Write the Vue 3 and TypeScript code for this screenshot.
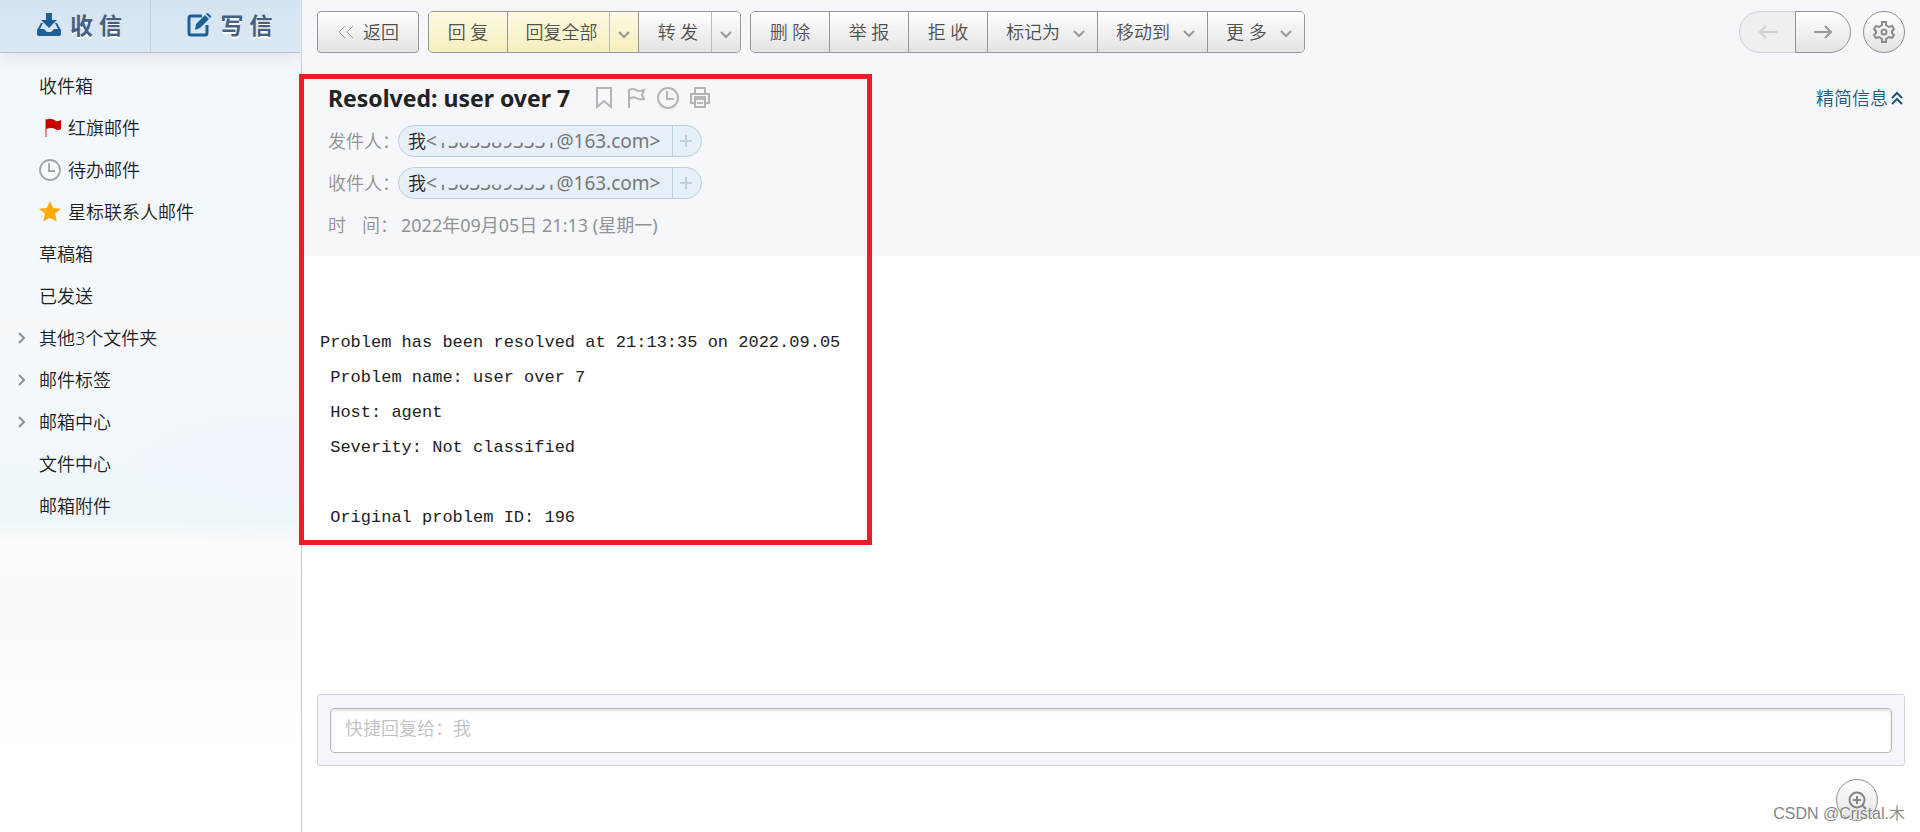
<script setup lang="ts">
import { ref } from 'vue'

interface Folder {
  name: string
  icon?: 'flag' | 'clock' | 'star'
  expandable?: boolean
}

interface Action {
  label: string
  menu?: boolean
}

const folders: Folder[] = [
  { name: '收件箱' },
  { name: '红旗邮件', icon: 'flag' },
  { name: '待办邮件', icon: 'clock' },
  { name: '星标联系人邮件', icon: 'star' },
  { name: '草稿箱' },
  { name: '已发送' },
  { name: '其他3个文件夹', expandable: true },
  { name: '邮件标签', expandable: true },
  { name: '邮箱中心', expandable: true },
  { name: '文件中心' },
  { name: '邮箱附件' },
]

const actions: Action[] = [
  { label: '删 除' },
  { label: '举 报' },
  { label: '拒 收' },
  { label: '标记为', menu: true },
  { label: '移动到', menu: true },
  { label: '更 多', menu: true },
]

const people = ['发件人：', '收件人：']

const body = [
  'Problem has been resolved at 21:13:35 on 2022.09.05',
  ' Problem name: user over 7',
  ' Host: agent',
  ' Severity: Not classified',
  '',
  ' Original problem ID: 196',
].join('\n')

const reply = ref('')
</script>

<template>
  <div class="mail">
    <aside class="sidebar">
      <div class="primary">
        <button type="button" class="primary-btn">
          <svg width="26" height="24" viewBox="0 0 26 24" aria-hidden="true">
            <path d="M10 0h6v7h5l-8 8-8-8h5z" fill="#1d5f96" />
            <path d="M5 10 1 17v4q0 2 2 2h20q2 0 2-2v-4l-4-7h-2l3 6h-4l-3 3h-4l-3-3H4l3-6z" fill="#1d5f96" />
          </svg>
          <span>收 信</span>
        </button>
        <button type="button" class="primary-btn">
          <svg width="26" height="24" viewBox="0 0 26 24" aria-hidden="true">
            <path d="M15 3H4Q2 3 2 5v15q0 2 2 2h14q2 0 2-2v-8" fill="none" stroke="#1d5f96" stroke-width="3" />
            <path d="m8 17 1-6L18 2l4 4-9 9zM19 1l1-1q1 0 3 2t1 2l-1 1z" fill="#1d5f96" />
          </svg>
          <span>写 信</span>
        </button>
      </div>
      <nav class="folders">
        <a v-for="f in folders" :key="f.name" href="#" class="folder">
          <span class="gutter">
            <svg v-if="f.expandable" width="10" height="12" viewBox="0 0 10 12" aria-hidden="true">
              <path d="m2 1 5 5-5 5" fill="none" stroke="#8b8f92" stroke-width="2" />
            </svg>
          </span>
          <span v-if="f.icon" class="folder-icon">
            <svg v-if="f.icon === 'flag'" width="22" height="22" viewBox="0 0 22 22" aria-hidden="true">
              <path d="M7 2v18" stroke="#d06a6a" stroke-width="1.5" />
              <path d="M7 3q3-2 6-1t4 2 5-1v9q-3 2-6 0t-9 0z" fill="#c90000" />
            </svg>
            <svg v-else-if="f.icon === 'clock'" width="22" height="22" viewBox="0 0 22 22" aria-hidden="true">
              <circle cx="11" cy="11" r="10" fill="#f7f9fa" stroke="#a3a6a8" stroke-width="1.8" />
              <path d="M10 4v8h6" fill="none" stroke="#a3a6a8" stroke-width="1.8" />
            </svg>
            <svg v-else width="22" height="22" viewBox="0 0 22 22" aria-hidden="true">
              <path d="m11 0 3.200 7 7.800.8-6 5 1.800 7.700L11 16.700l-6.800 3.800L6 12.800l-6-5L7.800 7z" fill="#ffa90a" />
            </svg>
          </span>
          <span>{{ f.name }}</span>
        </a>
      </nav>
    </aside>

    <main class="content">
      <header class="head">
        <div class="toolbar">
          <button type="button" class="btn single back">
            <svg width="18" height="14" viewBox="0 0 18 14" aria-hidden="true">
              <path d="M8 1 2 7l6 6M16 1l-6 6 6 6" fill="none" stroke="#999" />
            </svg>
            返回
          </button>
          <div class="group">
            <button type="button" class="btn yellow">回 复</button>
            <button type="button" class="btn yellow reply-all">回复全部</button>
            <button type="button" class="btn yellow drop" aria-label="回复全部选项">
              <svg width="12" height="8" viewBox="0 0 12 8" aria-hidden="true"><path d="m1 1 5 5 5-5" /></svg>
            </button>
            <button type="button" class="btn forward">转 发</button>
            <button type="button" class="btn drop" aria-label="转发选项">
              <svg width="12" height="8" viewBox="0 0 12 8" aria-hidden="true"><path d="m1 1 5 5 5-5" /></svg>
            </button>
          </div>
          <div class="group">
            <button v-for="a in actions" :key="a.label" type="button" class="btn" :class="{ menu: a.menu }">
              {{ a.label }}
              <svg v-if="a.menu" width="12" height="8" viewBox="0 0 12 8" aria-hidden="true"><path d="m1 1 5 5 5-5" /></svg>
            </button>
          </div>
          <div class="pager">
            <button type="button" class="btn page prev" disabled aria-label="上一封">
              <svg width="20" height="14" viewBox="0 0 20 14" aria-hidden="true">
                <path d="M19 7H2M8 1 2 7l6 6" fill="none" stroke="#cfcfcf" stroke-width="2" />
              </svg>
            </button>
            <button type="button" class="btn page next" aria-label="下一封">
              <svg width="20" height="14" viewBox="0 0 20 14" aria-hidden="true">
                <path d="M1 7h17M12 1l6 6-6 6" fill="none" stroke="#999" stroke-width="2" />
              </svg>
            </button>
          </div>
          <button type="button" class="btn round" aria-label="设置">
            <svg width="22" height="22" viewBox="0 0 22 22" fill="none" stroke="#8c8c8c" stroke-width="2" aria-hidden="true">
              <path d="M9 1h4v3l3 2 3-1 2 3-2 2v2l2 2-2 3-3-1-3 2v3H9v-3l-3-2-3 1-2-3 2-2v-2L1 8l2-3 3 1 3-2z" />
              <circle cx="11" cy="11" r="2.500" />
            </svg>
          </button>
        </div>

        <div class="title-row">
          <h1>Resolved: user over 7</h1>
          <div class="marks">
            <button type="button" aria-label="书签">
              <svg width="22" height="22" viewBox="0 0 22 22"><path d="M4 1h14v19l-7-6-7 6z" /></svg>
            </button>
            <button type="button" aria-label="旗标">
              <svg width="22" height="22" viewBox="0 0 22 22"><path d="M4 21V3q4-2 7 0t8 0l-2 5 2 4q-5 1-8-1t-7 1" /></svg>
            </button>
            <button type="button" aria-label="待办">
              <svg width="22" height="22" viewBox="0 0 22 22"><circle cx="11" cy="11" r="10" /><path d="M10 4v8h7" /></svg>
            </button>
            <button type="button" aria-label="打印">
              <svg width="22" height="22" viewBox="0 0 22 22"><path d="M6 7V1h10v6M6 16H2V7h18v9h-4M6 12h10v8H6zM5 10h12M8 16h6" /></svg>
            </button>
          </div>
          <a href="#" class="brief">
            精简信息
            <svg width="12" height="14" viewBox="0 0 12 14" aria-hidden="true">
              <path d="m1 7 5-5 5 5M1 13l5-5 5 5" fill="none" stroke="#1f5a78" stroke-width="2" />
            </svg>
          </a>
        </div>

        <dl class="meta">
          <div v-for="p in people" :key="p" class="meta-row">
            <dt>{{ p }}</dt>
            <dd class="pill">
              <span class="address"><span class="me">我</span>&lt;<span class="hidden-digits">13033893331</span>@163.com&gt;</span>
              <button type="button" aria-label="添加联系人">
                <svg width="12" height="12" viewBox="0 0 12 12" aria-hidden="true"><path d="M6 0v12M0 6h12" stroke="#bcd0e0" stroke-width="2" /></svg>
              </button>
            </dd>
          </div>
          <div class="meta-row">
            <dt class="spread"><span>时</span><span>间：</span></dt>
            <dd class="date">2022年09月05日 21:13 (星期一)</dd>
          </div>
        </dl>
      </header>

      <pre class="body">{{ body }}</pre>

      <form class="quick" @submit.prevent>
        <input v-model="reply" type="text" aria-label="快捷回复" placeholder="快捷回复给：我" />
      </form>
      <footer class="foot">
        <button type="button" class="btn round" aria-label="放大">
          <svg width="20" height="20" viewBox="0 0 20 20" fill="none" stroke="#858585" stroke-width="2" aria-hidden="true">
            <circle cx="10" cy="10" r="7.500" />
            <path d="M10 6v8M6 10h8M15 15l4 4" />
          </svg>
        </button>
      </footer>
      <div class="highlight"></div>
    </main>
    <div class="watermark">CSDN @Cristal.木</div>
  </div>
</template>

<style>
body {
  margin: 0;
}
</style>

<style scoped>
.mail {
  position: relative;
  display: flex;
  min-height: 100vh;
  background: #fff;
  color: #1c1c1c;
  font: 350 18px/26px "Noto Sans", "Noto Sans CJK SC", sans-serif;
}
.mail * {
  box-sizing: border-box;
}
button,
input {
  margin: 0;
  padding: 0;
  border: 0;
  background: none;
  color: inherit;
  font: inherit;
}
a {
  color: inherit;
  text-decoration: none;
}
.sidebar {
  flex: 0 0 302px;
  border-right: 1px solid #c3c9ce;
  background:
    radial-gradient(ellipse 160px 80px at 270px 470px, #eef4fa, transparent),
    linear-gradient(#f1f7fb 50px, #f5f9fc 330px, #f1f7fb 460px, #edf6f9 515px, #fafcfd 545px, #f8fbfd 620px, #fdfdfe 700px, #fff 800px);
}
.primary {
  display: flex;
  height: 53px;
  margin-right: 1px;
  border-bottom: 1px solid #b3c3d1;
  background: linear-gradient(#d3e4f1, #dbe8f3);
  box-shadow: 0 4px 14px #dfe5ea;
}
.primary-btn {
  display: flex;
  flex: 1;
  align-items: center;
  gap: 8px;
  padding: 0 0 2px 36px;
  color: #456080;
  font-size: 23px;
  font-weight: 700;
  text-shadow: 0 2px 0 #fff;
}
.primary-btn + .primary-btn {
  border-left: 1px solid #c0d0de;
}
.folders {
  padding-top: 12px;
}
.folder {
  display: flex;
  align-items: center;
  height: 42px;
}
.gutter {
  display: flex;
  flex: 0 0 39px;
  padding-left: 17px;
}
.folder-icon {
  display: flex;
  margin-right: 7px;
}
.content {
  position: relative;
  display: flex;
  flex: 1;
  flex-direction: column;
  min-width: 0;
}
.head {
  height: 256px;
  background: #f5f7fb;
}
.toolbar {
  display: flex;
  padding: 11px 15px 0;
}
.btn {
  display: flex;
  align-items: center;
  justify-content: center;
  height: 42px;
  padding: 0 18px;
  background: linear-gradient(#fff, #e3e3e3);
  color: #505050;
  white-space: nowrap;
}
.single {
  border: 1px solid #969696;
  border-radius: 4px;
}
.back {
  gap: 8px;
  width: 102px;
  padding: 0;
}
.group {
  display: flex;
  height: 42px;
  margin-left: 9px;
  overflow: hidden;
  border: 1px solid #969696;
  border-radius: 5px;
}
.group .btn {
  height: 40px;
  width: 78px;
  padding: 0;
}
.group .btn + .btn {
  width: 79px;
  border-left: 1px solid #969696;
}
.group .yellow {
  background: linear-gradient(#fcfae3, #f5efbd);
}
.group .btn.reply-all {
  width: 102px;
  padding-left: 6px;
}
.group .btn.forward {
  width: 73px;
  padding-left: 6px;
}
.group .btn.drop {
  width: 29px;
  padding-top: 6px;
  border-left-color: #bbb;
}
.group .btn.menu {
  gap: 13px;
  width: auto;
  padding: 0 12px 0 18px;
}
.group svg {
  fill: none;
  stroke: #999;
  stroke-width: 2;
}
.menu svg {
  margin-top: 4px;
}
.pager {
  display: flex;
  margin-left: auto;
}
.page {
  width: 56px;
  padding: 0;
  border: 1px solid #929292;
}
.prev {
  border-color: #d2d2d2;
  border-right: 0;
  border-radius: 21px 0 0 21px;
  background: #efeff0;
}
.next {
  border-radius: 0 21px 21px 0;
}
.round {
  width: 42px;
  padding: 0;
  border: 1px solid #929292;
  border-radius: 50%;
}
.toolbar .round {
  margin-left: 12px;
}
.title-row {
  display: flex;
  align-items: center;
  height: 36px;
  margin-top: 27px;
  padding: 0 17px 0 26px;
}
h1 {
  margin: 0;
  color: #222;
  font-size: 23px;
  font-weight: 700;
}
.marks {
  display: flex;
  gap: 10px;
  margin-left: 23px;
}
.marks button {
  display: flex;
}
.marks svg {
  fill: none;
  stroke: #b3b5b8;
  stroke-width: 2;
}
.brief {
  display: flex;
  align-items: center;
  gap: 3px;
  margin-left: auto;
  color: #1f5a78;
}
.meta {
  margin: 4px 0 0;
  padding-left: 26px;
}
.meta-row {
  display: flex;
  align-items: center;
  height: 42px;
  color: #929292;
}
.meta dt {
  width: 70px;
  white-space: nowrap;
}
.meta .spread {
  display: flex;
  gap: 16px;
}
.meta dd {
  margin: 0;
}
.meta .date {
  margin-left: 3px;
  font-weight: 400;
}
.pill {
  display: flex;
  height: 32px;
  border: 1px solid #bdd0e0;
  border-radius: 16px;
  background: #e6f0f8;
  color: #777;
}
.address {
  padding: 0 12px 0 9px;
  font-size: 19px;
  font-weight: 400;
  line-height: 30px;
}
.me {
  color: #222;
  font-size: 18px;
  font-weight: 350;
}
.hidden-digits {
  display: inline-block;
  clip-path: inset(56% 0 0 0);
}
.pill button {
  display: flex;
  align-items: center;
  width: 29px;
  padding-left: 7px;
  border-left: 1px solid #bdd0e0;
}
.body {
  flex: 1;
  margin: 0;
  padding: 69px 18px 0;
  color: #222;
  font: 17px/35px "Liberation Mono", monospace;
}
.quick {
  margin: 0 15px;
  padding: 13px 12px 12px;
  border: 1px solid #cfd6dc;
  border-radius: 3px;
  background: #f5f6fb;
}
.quick input {
  display: block;
  width: 100%;
  height: 45px;
  padding: 0 14px 6px;
  border: 1px solid #b5b8ba;
  border-radius: 4px;
  background: #fff;
  box-shadow: inset 0 2px 3px #e4e4e4;
}
.quick input::placeholder {
  color: #bfc1c2;
  opacity: 1;
}
.foot {
  display: flex;
  justify-content: flex-end;
  padding: 13px 42px 11px;
}
.highlight {
  position: absolute;
  top: 74px;
  left: -3px;
  width: 573px;
  height: 471px;
  border: 5px solid #e91d27;
  pointer-events: none;
}
.watermark {
  position: absolute;
  right: 15px;
  bottom: 5px;
  color: #858585;
  font: 350 16px/26px "Liberation Sans", "Noto Sans CJK SC", sans-serif;
  text-shadow: 1px 1px 0 #fff;
}
</style>
